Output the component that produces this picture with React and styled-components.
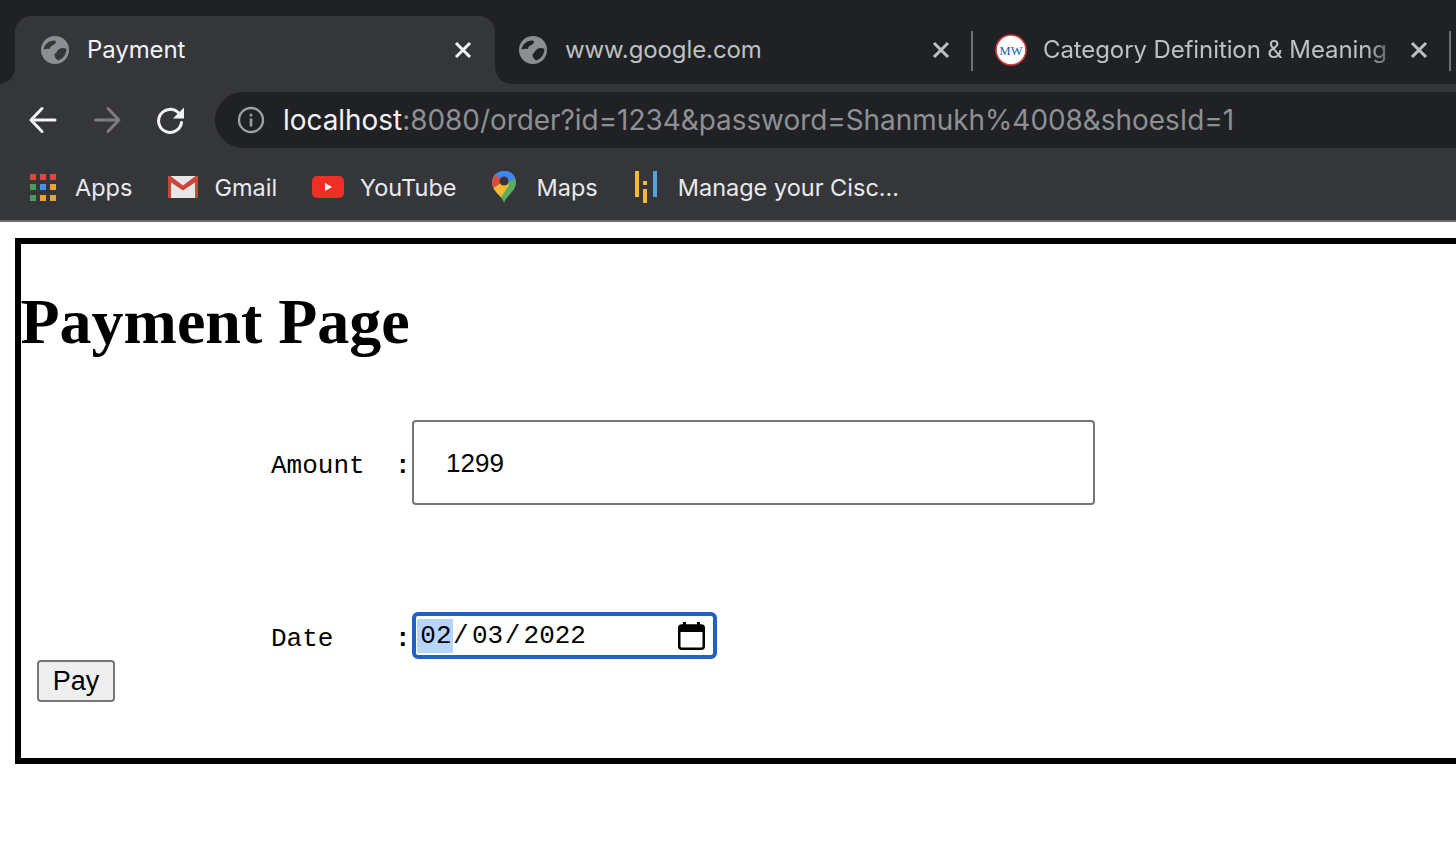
import React from "react";
import styled, { createGlobalStyle } from "styled-components";

const Global = createGlobalStyle`
  html, body { margin: 0; padding: 0; background: #fff; overflow: hidden; width: 1456px; height: 864px; }
`;
const UI = `"Inter", "Liberation Sans", sans-serif`;

const Chrome = styled.header`
  background: #35363a;
  border-bottom: 2px solid #6c6d70;
  font-family: ${UI};
`;
const TabStrip = styled.div`
  display: flex;
  height: 84px;
  padding: 16px 0 0 15px;
  box-sizing: border-box;
  background: #202124;
`;
const Tab = styled.div`
  position: relative;
  flex: 0 0 ${p => p.$w}px;
  box-sizing: border-box;
  display: flex;
  align-items: center;
  height: 68px;
  padding: 0 ${p => p.$pr}px 0 ${p => p.$pl}px;
  color: ${p => (p.$active ? "#f1f3f4" : "#bdc1c6")};
  background: ${p => (p.$active ? "#35363a" : "transparent")};
  border-radius: 16px 16px 0 0;
  ${p => p.$active && `
    &::before, &::after {
      content: "";
      position: absolute;
      bottom: 0;
      width: 16px;
      height: 16px;
    }
    &::before { left: -16px; background: radial-gradient(circle at 0 0, transparent 15.5px, #35363a 16px); }
    &::after { right: -16px; background: radial-gradient(circle at 100% 0, transparent 15.5px, #35363a 16px); }
  `}
  ${p => p.$sep && `
    &::after {
      content: "";
      position: absolute;
      right: 0;
      top: 15px;
      width: 2px;
      height: 40px;
      background: #6f7175;
    }
  `}
`;
const Favicon = styled.span`
  flex: none;
  display: flex;
  margin-right: ${p => p.$mr}px;
`;
const TabTitle = styled.span`
  flex: 1;
  min-width: 0;
  font-size: 24px;
  line-height: 32px;
  letter-spacing: -0.1px;
  white-space: nowrap;
  overflow: hidden;
  ${p => p.$fade && `-webkit-mask-image: linear-gradient(to right, #000 ${p.$fade}%, transparent 100%);`}
`;
const CloseIcon = styled.svg`
  flex: none;
  width: 18px;
  height: 18px;
  margin-left: 8px;
  stroke: currentColor;
  stroke-width: 3;
  color: ${p => (p.$active ? "#f1f3f4" : "#bdc1c6")};
`;
const Toolbar = styled.div`
  display: flex;
  align-items: center;
  height: 70px;
  padding: 8px 0 6px 28px;
  box-sizing: border-box;
`;
const NavIcon = styled.svg`
  flex: none;
  width: 30px;
  height: 30px;
  margin-right: ${p => p.$mr}px;
  fill: none;
  stroke: ${p => p.$c};
  stroke-width: 3;
  stroke-linecap: round;
  stroke-linejoin: round;
`;
const Omnibox = styled.div`
  flex: 1;
  display: flex;
  align-items: center;
  height: 56px;
  margin-right: -60px;
  padding-left: 22px;
  background: #202124;
  border-radius: 28px;
`;
const InfoIcon = styled.svg`
  flex: none;
  width: 28px;
  height: 28px;
  margin-right: 18px;
`;
const Url = styled.div`
  font-size: 27.9px;
  white-space: nowrap;
  color: #8e9094;
`;
const Host = styled.span`
  color: #f1f3f4;
`;
const Bookmarks = styled.nav`
  display: flex;
  align-items: center;
  height: 66px;
  padding-left: 30px;
  box-sizing: border-box;
`;
const Bookmark = styled.a`
  display: flex;
  align-items: center;
  margin-right: ${p => p.$mr}px;
  font-size: 23.5px;
  color: #e8eaed;
`;
const BmIcon = styled.svg`
  flex: none;
  width: ${p => p.$w}px;
  height: ${p => p.$h}px;
  margin-right: ${p => p.$mr}px;
`;

const Page = styled.main`
  padding: 16px 0 0 15px;
`;
const Box = styled.form`
  width: 1500px;
  height: 526px;
  box-sizing: border-box;
  border: 6px solid #000;
`;
const Heading = styled.h1`
  margin: 41px 0 0 -0.5px;
  font: bold 64px/74px "Liberation Serif", serif;
  color: #000;
`;
const Row = styled.div`
  display: flex;
  align-items: center;
  height: ${p => p.$h}px;
  margin-top: ${p => p.$mt}px;
  padding-left: 250px;
`;
const Label = styled.label`
  width: 124px;
  font: 26px/30px "Liberation Mono", monospace;
  color: #000;
  white-space: pre;
  position: relative;
  top: 3px;
`;
const Colon = styled.span`
  width: 17px;
  font: bold 26px/30px "Liberation Mono", monospace;
  position: relative;
  top: 3px;
`;
const AmountInput = styled.input`
  width: 683px;
  height: 85px;
  box-sizing: border-box;
  padding: 2px 32px 0;
  border: 2px solid #767676;
  border-radius: 4px;
  font: 26px "Liberation Sans", sans-serif;
  color: #000;
  outline: none;
  background: #fff;
`;
const DateField = styled.div`
  width: 305px;
  height: 47px;
  box-sizing: border-box;
  display: flex;
  align-items: center;
  padding: 0 8px 0 1px;
  border: 4px solid #2260c9;
  border-radius: 6px;
  font: 26px/34px "Liberation Mono", monospace;
  color: #000;
  background: #fff;
`;
const Segment = styled.span`
  padding: 0 1.5px 0 3.3px;
  background: ${p => (p.$selected ? "#b8d4fb" : "transparent")};
`;
const Slash = styled.span``;
const Spacer = styled.span`
  flex: 1;
`;
const PayButton = styled.button`
  display: block;
  width: 78px;
  height: 42px;
  margin: 1px 0 0 16px;
  box-sizing: border-box;
  border: 2px solid #767676;
  border-radius: 4px;
  background: #efefef;
  font: 27px "Liberation Sans", sans-serif;
  color: #000;
  padding: 0;
`;

const Globe = ({ bg }) => (
  <svg width="28" height="28" viewBox="0 0 28 28">
    <circle cx="14" cy="14" r="14" fill="#8b8e92" />
    <path d="M2.500 13C4 8 8 4.500 13 4.500c2.500 0 2.500 2.500 0 4-2 1.500-4 1.500-4 4.500-3-1-5 1-6.500 0z" fill={bg} />
    <path d="M25.500 13c-3.500-2-6.500-1-8.500 1-2 2-1 3-3.500 4-.5 3 1.500 5 3.500 6.500 5-1.500 8-5.500 8.500-11.500z" fill={bg} />
  </svg>
);
const Close = ({ active }) => (
  <CloseIcon $active={active} viewBox="0 0 18 18"><path d="M2 2l14 14M16 2L2 16" /></CloseIcon>
);

export default function App() {
  return (
    <>
      <Global />
      <Chrome>
        <TabStrip>
          <Tab $active $w={480} $pl={26} $pr={23}>
            <Favicon $mr={18}><Globe bg="#35363a" /></Favicon>
            <TabTitle>Payment</TabTitle>
            <Close active />
          </Tab>
          <Tab $w={478} $pl={24} $pr={23} $sep>
            <Favicon $mr={18}><Globe bg="#202124" /></Favicon>
            <TabTitle>www.google.com</TabTitle>
            <Close />
          </Tab>
          <Tab $w={478} $pl={22} $pr={23} $sep>
            <Favicon $mr={16}>
              <svg width="32" height="32" viewBox="0 0 32 32">
                <circle cx="16" cy="16" r="15" fill="#fff" stroke="#d0383a" strokeWidth="1.6" />
                <text x="16" y="20.500" textAnchor="middle" fontFamily="Liberation Serif, serif" fontSize="12.500" fill="#2a5c9e">MW</text>
              </svg>
            </Favicon>
            <TabTitle $fade={90}>Category Definition &amp; Meaning</TabTitle>
            <Close />
          </Tab>
        </TabStrip>
        <Toolbar>
          <NavIcon $c="#f1f3f4" $mr={35} viewBox="0 0 30 30"><path d="M27 15H3M14 3.500 3 15l11 11.500" /></NavIcon>
          <NavIcon $c="#7c7d80" $mr={34} viewBox="0 0 30 30"><path d="M2.500 15H26M15 3.500 26 15 15 26.500" /></NavIcon>
          <NavIcon $c="#f1f3f4" $mr={28} viewBox="0 0 30 30">
            <path d="M24.500 17.500a11.500 11.500 0 1 1-3-9.500L25 11" />
            <path d="M27 2.500v11H16z" fill="#f1f3f4" stroke="none" />
          </NavIcon>
          <Omnibox>
            <InfoIcon viewBox="0 0 28 28">
              <circle cx="14" cy="14" r="12" fill="none" stroke="#9aa0a6" strokeWidth="2.400" />
              <rect x="12.700" y="12.500" width="2.600" height="8" fill="#9aa0a6" />
              <rect x="12.700" y="7.800" width="2.600" height="2.600" fill="#9aa0a6" />
            </InfoIcon>
            <Url><Host>localhost</Host>:8080/order?id=1234&amp;password=Shanmukh%4008&amp;shoesId=1</Url>
          </Omnibox>
        </Toolbar>
        <Bookmarks>
          <Bookmark $mr={36}>
            <BmIcon $w={26} $h={27} $mr={19} viewBox="0 0 26 27">
              {[
                ["#e2453c", 0, 0], ["#e2453c", 10, 0], ["#e2453c", 20, 0],
                ["#4d9a5b", 0, 10], ["#4a8fe8", 10, 10], ["#e8a53c", 20, 10],
                ["#4d9a5b", 0, 21], ["#e8a53c", 10, 21], ["#e8a53c", 20, 21],
              ].map(([c, x, y]) => <rect key={`${x}-${y}`} x={x} y={y} width="6" height="6" fill={c} />)}
            </BmIcon>
            Apps
          </Bookmark>
          <Bookmark $mr={35}>
            <BmIcon $w={30} $h={22} $mr={16} viewBox="0 0 30 22">
              <rect width="30" height="22" rx="1.500" fill="#e6e6e6" />
              <path d="M0 1.500C0 .5.500 0 1.500 0h1L15 9.500 27.500 0h1c1 0 1.500.5 1.500 1.500V22h-3V6.500L15 14.500 3 6.500V22H0z" fill="#c8473b" />
            </BmIcon>
            Gmail
          </Bookmark>
          <Bookmark $mr={36}>
            <BmIcon $w={32} $h={22} $mr={16} viewBox="0 0 32 22">
              <rect width="32" height="22" rx="5" fill="#ee3024" />
              <path d="M13 7l7 4-7 4z" fill="#fff" />
            </BmIcon>
            YouTube
          </Bookmark>
          <Bookmark $mr={37}>
            <BmIcon $w={24} $h={32} $mr={20} viewBox="0 0 24 32">
              <path d="M12 0C5 0 0 5 0 11.500c0 4 2 7 5 10.500 3 3.500 6 6 7 10 1-4 4-6.500 7-10 3-3.500 5-6.500 5-10.500C24 5 19 0 12 0z" fill="#5bad5f" />
              <path d="M3.500 4C6 1.300 9 0 12 0c5.500 0 10 3.200 11.500 8L12 12z" fill="#4285f4" />
              <path d="M3.500 4C1 6.500 0 9 0 11.500c0 2 .5 4 1.500 5.500L12 10z" fill="#dd4b3e" />
              <path d="M1.500 17c1 2 2 3.500 3.500 5 1.500 1.500 3 3 4 4.500L17 14l-5-4z" fill="#f4b731" />
              <circle cx="12" cy="10" r="4.500" fill="#35363a" />
            </BmIcon>
            Maps
          </Bookmark>
          <Bookmark>
            <BmIcon $w={22} $h={32} $mr={21} viewBox="0 0 22 32">
              <rect x="0" y="0" width="4" height="26" fill="#f5b63f" />
              <rect x="8" y="10" width="4" height="4" fill="#f5b63f" />
              <rect x="8" y="18" width="4" height="14" fill="#f5b63f" />
              <rect x="18" y="0" width="4" height="26" fill="#4ea6dc" />
            </BmIcon>
            Manage your Cisc...
          </Bookmark>
        </Bookmarks>
      </Chrome>
      <Page>
        <Box>
          <Heading>Payment Page</Heading>
          <Row $mt={61} $h={85}>
            <Label>Amount</Label>
            <Colon>:</Colon>
            <AmountInput defaultValue="1299" />
          </Row>
          <Row $mt={107} $h={47}>
            <Label>Date</Label>
            <Colon>:</Colon>
            <DateField>
              <Segment $selected>02</Segment>
              <Slash>/</Slash>
              <Segment>03</Segment>
              <Slash>/</Slash>
              <Segment>2022</Segment>
              <Spacer />
              <svg width="27" height="28" viewBox="0 0 27 28">
                <rect x="1.250" y="3.500" width="24.500" height="23.250" rx="2.500" fill="none" stroke="#000" strokeWidth="2.500" />
                <path d="M1 4h25v6H1zM5 0h3v5H5zM19 0h3v5h-3z" fill="#000" />
              </svg>
            </DateField>
          </Row>
          <PayButton type="button">Pay</PayButton>
        </Box>
      </Page>
    </>
  );
}
